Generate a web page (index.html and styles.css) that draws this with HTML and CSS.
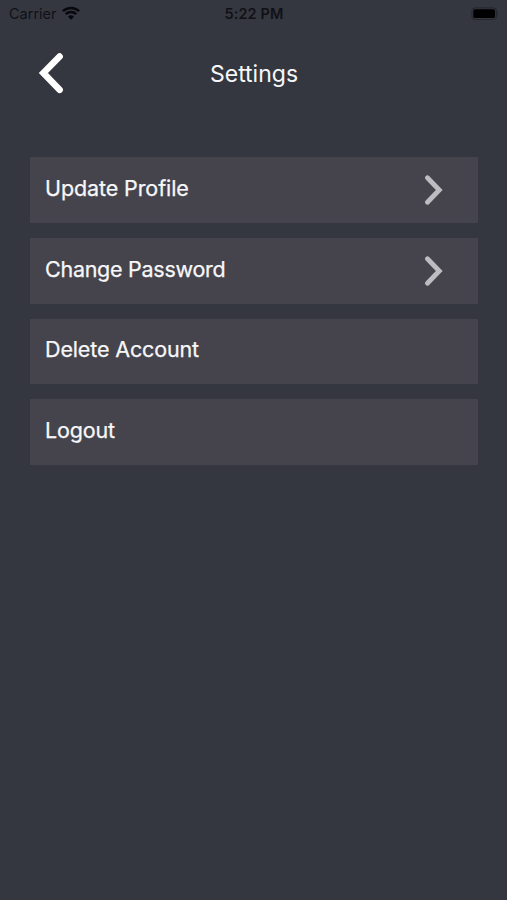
FILE: index.html
```html
<!DOCTYPE html>
<html lang="en">
<head>
<meta charset="utf-8">
<title>Settings</title>
<link rel="stylesheet" href="styles.css">
</head>
<body>
<div class="screen">
  <div class="status">
    <div class="carrier"><span>Carrier</span>
      <svg class="wifi" width="18" height="14" viewBox="0 0 18 14"><path d="M.9 5.2a11.6 11.6 0 0 1 16.2 0M3.8 8.2a7.4 7.4 0 0 1 10.4 0" fill="none" stroke="#08090d" stroke-width="2.5"/><path d="M9 13.8 6 10.8a4.3 4.3 0 0 1 6 0z" fill="#08090d"/></svg>
    </div>
    <time class="clock">5:22 PM</time>
    <svg class="battery" width="28" height="14" viewBox="0 0 28 14"><rect x=".9" y=".9" width="24.6" height="11.6" rx="3" fill="none" stroke="#24262d"/><rect x="2.3" y="2.3" width="21.8" height="8.8" rx="1.6" fill="#000002"/><path d="M26.6 4.8q1.4 1.9 0 3.8z" fill="#1c1e24"/></svg>
  </div>
  <header class="header">
    <svg class="back" width="26" height="42" viewBox="0 0 26 42"><path d="M21.6 4.5 5.4 21l16.2 16.8" fill="none" stroke="#fff" stroke-width="6.6" stroke-linecap="round" stroke-linejoin="miter"/></svg>
    <h1 class="title">Settings</h1>
  </header>
  <nav class="list">
    <a class="row"><span class="profile">Update Profile</span><svg class="chevron" width="20" height="32" viewBox="0 0 20 32"><path d="M3.4 3.8 15.3 16 3.4 28.2" fill="none" stroke="#bdbdc1" stroke-width="4.8" stroke-linecap="round"/></svg></a>
    <a class="row"><span class="password">Change Password</span><svg class="chevron" width="20" height="32" viewBox="0 0 20 32"><path d="M3.4 3.8 15.3 16 3.4 28.2" fill="none" stroke="#bdbdc1" stroke-width="4.8" stroke-linecap="round"/></svg></a>
    <a class="row"><span class="delete">Delete Account</span></a>
    <a class="row"><span class="logout">Logout</span></a>
  </nav>
</div>
</body>
</html>
```
FILE: styles.css
```css
* { box-sizing: border-box; }
body { margin: 0; background: #353740; font-family: Inter, "Liberation Sans", sans-serif; }
.screen { width: 507px; height: 900px; overflow: hidden; background: #353740; color: #f7f7f9; border-right: 1px solid #35343f; border-bottom: 1px solid #35343f; }
.status { display: grid; grid-template-columns: 1fr auto 1fr; height: 27px; align-items: center; padding: 0 7px 0 9px; color: #101116; font-size: 14.5px; line-height: 18px; }
.carrier { display: flex; align-items: center; gap: 6px; }
.wifi { margin: -2px 0 0 -1px; }
.clock { font-weight: 600; letter-spacing: .1px; }
.battery { justify-self: end; }
.header { display: grid; grid-template-columns: 1fr auto 1fr; align-items: center; height: 92px; padding: 0 36px 0 38px; }
.title { grid-column: 2; margin: 0; padding-top: 1px; font-size: 23px; font-weight: 400; line-height: 28px; }
.list { display: grid; gap: 15px; grid-auto-rows: 65.6px; padding: 38.4px 28.5px 0 30px; }
.row { display: flex; justify-content: space-between; align-items: flex-start; padding: 17px 33.5px 0 15px; background: #45444c; font-size: 21.5px; line-height: 28px; border-radius: 1px; }
.row span { margin-top: -.3px; -webkit-text-stroke: .25px currentColor; }
.profile { letter-spacing: -.1px; }
.password { letter-spacing: -.27px; }
.delete { letter-spacing: -.14px; }
.logout { letter-spacing: -.16px; }
.chevron { flex: none; }
```
